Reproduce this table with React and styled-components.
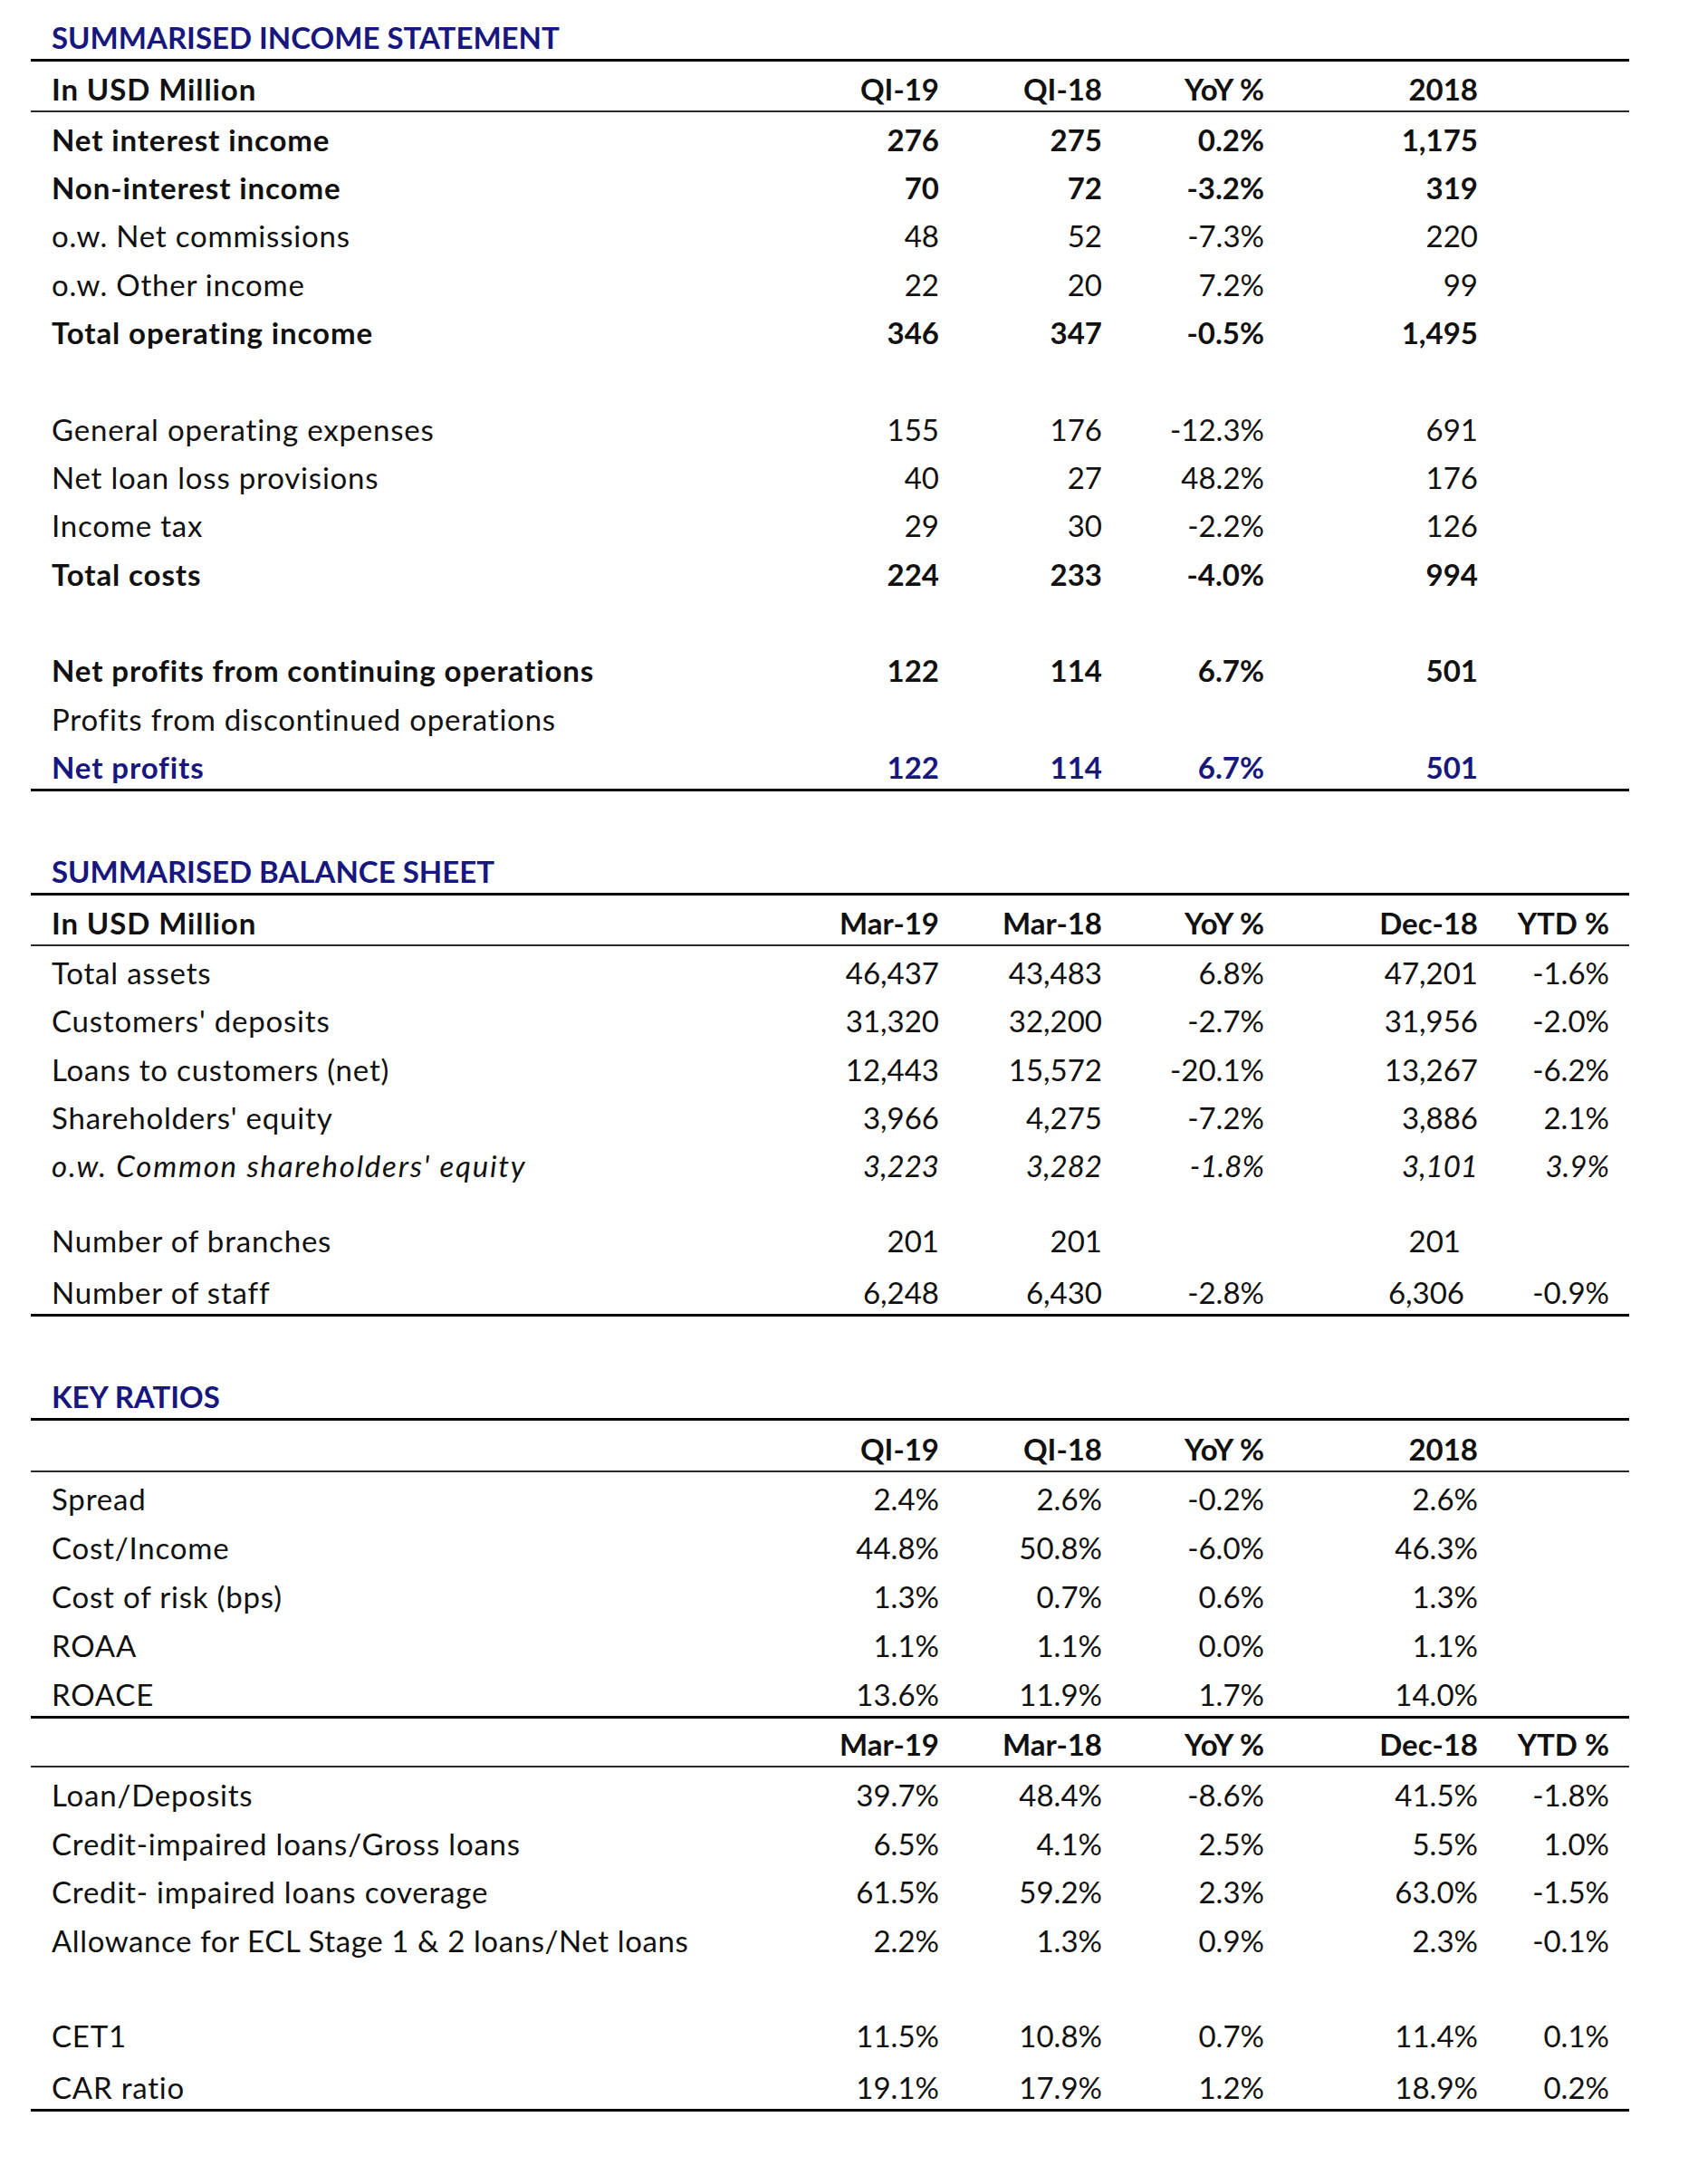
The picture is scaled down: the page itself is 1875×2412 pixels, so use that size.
import React from "react";
import styled, { createGlobalStyle } from "styled-components";

const NAVY = "#17177d";

const GlobalStyle = createGlobalStyle`
  html, body {
    margin: 0;
    padding: 0;
    background: #fff;
  }
  body {
    font-family: Lato, "Liberation Sans", sans-serif;
    color: #111;
  }
`;

// table data -- [label, c1, c2, c3, c4, c5]
const income = {
  title: "SUMMARISED INCOME STATEMENT",
  blocks: [
    { head: true, h: 54.3, rule: "thin", cells: ["In USD Million", "QI-19", "QI-18", "YoY %", "2018", ""] },
    { bold: true, cells: ["Net interest income", "276", "275", "0.2%", "1,175", ""] },
    { bold: true, cells: ["Non-interest income", "70", "72", "-3.2%", "319", ""] },
    { cells: ["o.w. Net commissions", "48", "52", "-7.3%", "220", ""] },
    { cells: ["o.w. Other income", "22", "20", "7.2%", "99", ""] },
    { bold: true, cells: ["Total operating income", "346", "347", "-0.5%", "1,495", ""] },
    { blank: true },
    { cells: ["General operating expenses", "155", "176", "-12.3%", "691", ""] },
    { cells: ["Net loan loss provisions", "40", "27", "48.2%", "176", ""] },
    { cells: ["Income tax", "29", "30", "-2.2%", "126", ""] },
    { bold: true, cells: ["Total costs", "224", "233", "-4.0%", "994", ""] },
    { blank: true },
    { bold: true, cells: ["Net profits from continuing operations", "122", "114", "6.7%", "501", ""] },
    { cells: ["Profits from discontinued operations", "", "", "", "", ""] },
    { bold: true, navy: true, rule: "thick", cells: ["Net profits", "122", "114", "6.7%", "501", ""] },
  ],
};

const balance = {
  title: "SUMMARISED BALANCE SHEET",
  blocks: [
    { head: true, h: 54, rule: "thin", cells: ["In USD Million", "Mar-19", "Mar-18", "YoY %", "Dec-18", "YTD %"] },
    { h: 53.2, cells: ["Total assets", "46,437", "43,483", "6.8%", "47,201", "-1.6%"] },
    { h: 53.2, cells: ["Customers' deposits", "31,320", "32,200", "-2.7%", "31,956", "-2.0%"] },
    { h: 53.2, cells: ["Loans to customers (net)", "12,443", "15,572", "-20.1%", "13,267", "-6.2%"] },
    { h: 53.2, cells: ["Shareholders' equity", "3,966", "4,275", "-7.2%", "3,886", "2.1%"] },
    { h: 53.2, italic: true, cells: ["o.w. Common shareholders' equity", "3,223", "3,282", "-1.8%", "3,101", "3.9%"] },
    { blank: true, h: 26 },
    { h: 57, cells: ["Number of branches", "201", "201", "", "201", ""], shift: { 3: 19 } },
    { h: 57, rule: "thick", cells: ["Number of staff", "6,248", "6,430", "-2.8%", "6,306", "-0.9%"], shift: { 3: 15 } },
  ],
};

const ratios = {
  title: "KEY RATIOS",
  blocks: [
    { head: true, h: 54.5, rule: "thin", cells: ["", "QI-19", "QI-18", "YoY %", "2018", ""] },
    { h: 53.8, cells: ["Spread", "2.4%", "2.6%", "-0.2%", "2.6%", ""] },
    { h: 53.8, cells: ["Cost/Income", "44.8%", "50.8%", "-6.0%", "46.3%", ""] },
    { h: 53.8, cells: ["Cost of risk (bps)", "1.3%", "0.7%", "0.6%", "1.3%", ""] },
    { h: 53.8, cells: ["ROAA", "1.1%", "1.1%", "0.0%", "1.1%", ""] },
    { h: 53.8, rule: "thick", cells: ["ROACE", "13.6%", "11.9%", "1.7%", "14.0%", ""] },
    { head: true, h: 52.6, rule: "thin", cells: ["", "Mar-19", "Mar-18", "YoY %", "Dec-18", "YTD %"] },
    { h: 53.7, cells: ["Loan/Deposits", "39.7%", "48.4%", "-8.6%", "41.5%", "-1.8%"] },
    { h: 53.7, cells: ["Credit-impaired loans/Gross loans", "6.5%", "4.1%", "2.5%", "5.5%", "1.0%"] },
    { h: 53.7, cells: ["Credit- impaired loans coverage", "61.5%", "59.2%", "2.3%", "63.0%", "-1.5%"] },
    { h: 53.7, tight: true, cells: ["Allowance for ECL Stage 1 & 2 loans/Net loans", "2.2%", "1.3%", "0.9%", "2.3%", "-0.1%"] },
    { blank: true, h: 52 },
    { h: 53.3, cells: ["CET1", "11.5%", "10.8%", "0.7%", "11.4%", "0.1%"] },
    { h: 56.7, rule: "thick", cells: ["CAR ratio", "19.1%", "17.9%", "1.2%", "18.9%", "0.2%"] },
  ],
};

function Table({ data }) {
  return (
    <Section>
      <Title>{data.title}</Title>
      {data.blocks.map((b, i) => {
        if (b.blank) return <Row key={i} $h={b.h || 53.35} />;
        const [label, ...vals] = b.cells;
        const shift = b.shift || {};
        return (
          <Row
            key={i}
            $h={b.h || 53.35}
            $rule={b.rule}
            $bold={b.head || b.bold}
            $italic={b.italic}
            $navy={b.navy}
          >
            <Label $bold={b.head || b.bold} $italic={b.italic} $tight={b.tight}>
              {label}
            </Label>
            {vals.slice(0, 3).map((v, j) => (
              <Value key={j}>{v}</Value>
            ))}
            <Gap />
            {vals.slice(3).map((v, j) => (
              <Value key={j + 3} $shift={shift[j + 3]}>
                {v}
              </Value>
            ))}
          </Row>
        );
      })}
    </Section>
  );
}

export default function App() {
  return (
    <>
      <GlobalStyle />
      <Page>
        <Table data={income} />
        <Table data={balance} />
        <Table data={ratios} />
      </Page>
    </>
  );
}

// Styles
const Page = styled.div`
  width: 1765px;
  padding: 3px 0 80px 34px;
`;

const Section = styled.section`
  & + & {
    margin-top: 50px;
  }
`;

const Title = styled.h2`
  margin: 0;
  height: 65px;
  box-sizing: border-box;
  padding: 0 0 5px 23px;
  display: flex;
  align-items: flex-end;
  font-size: 33px;
  line-height: 37px;
  font-weight: 700;
  color: ${NAVY};
  border-bottom: 3px solid #000;
`;

const Row = styled.div`
  display: grid;
  grid-template-columns: 845px 180px 180px 179px 56px 180px 145px;
  align-items: end;
  height: ${(p) => p.$h}px;
  font-size: 33px;
  line-height: 37px;
  font-weight: ${(p) => (p.$bold ? 700 : 400)};
  font-style: ${(p) => (p.$italic ? "italic" : "normal")};
  color: ${(p) => (p.$navy ? NAVY : "#111")};
  border-bottom: ${(p) =>
    p.$rule === "thick"
      ? "3px solid #000"
      : p.$rule === "thin"
      ? "2px solid #2a2a2a"
      : "none"};
`;

const Label = styled.div`
  padding: 0 0 5px 23px;
  white-space: nowrap;
  letter-spacing: ${(p) =>
    p.$italic ? "1.8px" : p.$tight ? "0.6px" : p.$bold ? "0.9px" : "0.8px"};
`;

const Value = styled.div`
  padding: 0 ${(p) => 22 + (p.$shift || 0)}px 5px 0;
  text-align: right;
  white-space: nowrap;
`;

const Gap = styled.div``;
